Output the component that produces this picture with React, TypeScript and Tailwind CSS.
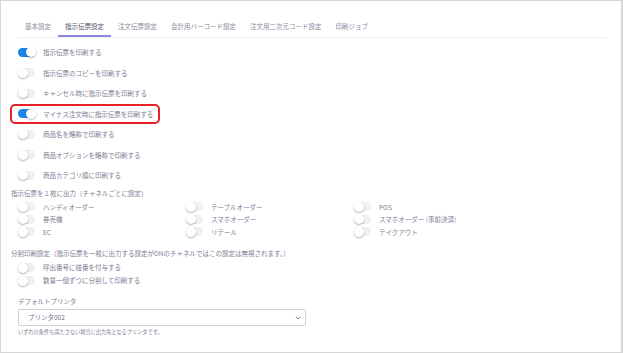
import React from "react";

const font = { fontFamily: '"Noto Sans CJK JP", "Noto Sans", sans-serif' };

function Toggle({ on = false }: { on?: boolean }) {
  return (
    <span
      className={
        "relative inline-block w-[17px] h-[9px] rounded-full shrink-0 " +
        (on ? "bg-[#1b84e6]" : "bg-[#f1f1f4] border border-[#ececf0]")
      }
    >
      <span
        className={
          "absolute top-1/2 -translate-y-1/2 w-[10px] h-[10px] rounded-full bg-white shadow-[0_1px_2px_rgba(0,0,0,0.3)] " +
          (on ? "right-[-1px]" : "left-[-1px]")
        }
      />
    </span>
  );
}

function Row({ label, on, highlight }: { label: string; on?: boolean; highlight?: boolean }) {
  return (
    <div className="relative h-[20.5px] flex items-center pl-[17px]">
      {highlight && (
        <span className="absolute left-[9px] top-[0px] w-[150px] h-[20px] border-2 border-[#e8202a] rounded-[5px]" />
      )}
      <Toggle on={on} />
      <span className="ml-[8px] text-[6.5px] text-[#7c7c92] leading-none">{label}</span>
    </div>
  );
}

function GridItem({ label }: { label: string }) {
  return (
    <div className="h-[12.5px] flex items-center pl-[17px]">
      <Toggle />
      <span className="ml-[8px] text-[6.5px] text-[#7c7c92] leading-none">{label}</span>
    </div>
  );
}

export default function App() {
  const tabs = ["基本設定", "指示伝票設定", "注文伝票設定", "会計用バーコード設定", "注文用二次元コード設定", "印刷ジョブ"];
  return (
    <div
      style={font}
      className="w-[623px] h-[353px] bg-white border border-[#d6d6d6] border-r-2 overflow-hidden"
    >
      <div className="mt-[15px] ml-[17px] mr-[15px] flex border-b border-[#eeeef8] h-[22px]">
        {tabs.map((t, i) => (
          <div
            key={t}
            className={
              "px-[7px] h-full flex items-center text-[6.5px] leading-none " +
              (i === 1
                ? "text-[#55556a] border-b-2 border-[#8c89dc] mb-[-1px] pt-[2px]"
                : "text-[#8a8a9c]")
            }
          >
            {t}
          </div>
        ))}
      </div>

      <div className="pt-[4px]">
        <Row label="指示伝票を印刷する" on />
        <Row label="指示伝票のコピーを印刷する" />
        <Row label="キャンセル時に指示伝票を印刷する" />
        <Row label="マイナス注文時に指示伝票を印刷する" on highlight />
        <Row label="商品名を略称で印刷する" />
        <Row label="商品オプションを略称で印刷する" />
        <Row label="商品カテゴリ順に印刷する" />
      </div>

      <div className="pl-[10px] mt-[3px] h-[10px] flex items-center text-[6.5px] text-[#7c7c92] leading-none">
        指示伝票を１枚に出力（チャネルごとに設定）
      </div>
      <div className="grid grid-cols-[168px_168px_168px] mt-[2px]">
        <GridItem label="ハンディオーダー" />
        <GridItem label="テーブルオーダー" />
        <GridItem label="POS" />
        <GridItem label="券売機" />
        <GridItem label="スマホオーダー" />
        <GridItem label="スマホオーダー (事前決済)" />
        <GridItem label="EC" />
        <GridItem label="リテール" />
        <GridItem label="テイクアウト" />
      </div>

      <div className="pl-[10px] mt-[10px] h-[10px] flex items-center text-[6.5px] text-[#7c7c92] leading-none">
        分割印刷設定（指示伝票を一枚に出力する設定がONのチャネルではこの設定は無視されます。）
      </div>
      <div className="mt-[3px]">
        <div className="h-[13px] flex items-center pl-[17px]">
          <Toggle />
          <span className="ml-[8px] text-[6.5px] text-[#7c7c92] leading-none">呼出番号に枝番を付与する</span>
        </div>
        <div className="h-[13px] flex items-center pl-[17px]">
          <Toggle />
          <span className="ml-[8px] text-[6.5px] text-[#7c7c92] leading-none">数量一個ずつに分割して印刷する</span>
        </div>
      </div>

      <div className="pl-[17px] mt-[9px]">
        <div className="h-[10px] flex items-center text-[6.5px] text-[#7c7c92] leading-none">デフォルトプリンタ</div>
        <div className="mt-[3px] w-[288px] h-[17px] border border-[#cfcfe0] rounded-[2px] flex items-center justify-between pl-[9px] pr-[4px]">
          <span className="text-[6.5px] text-[#6c6c84] leading-none">プリンタ002</span>
          <svg width="6" height="4" viewBox="0 0 6 4">
            <path d="M0.8 0.8 L3 3 L5.2 0.8" stroke="#6c6c84" strokeWidth="0.9" fill="none" />
          </svg>
        </div>
        <div className="mt-[2px] h-[7px] flex items-center text-[5.2px] text-[#7c7c92] leading-none">
          いずれの条件も満たさない場合に出力先となるプリンタです。
        </div>
      </div>
    </div>
  );
}
